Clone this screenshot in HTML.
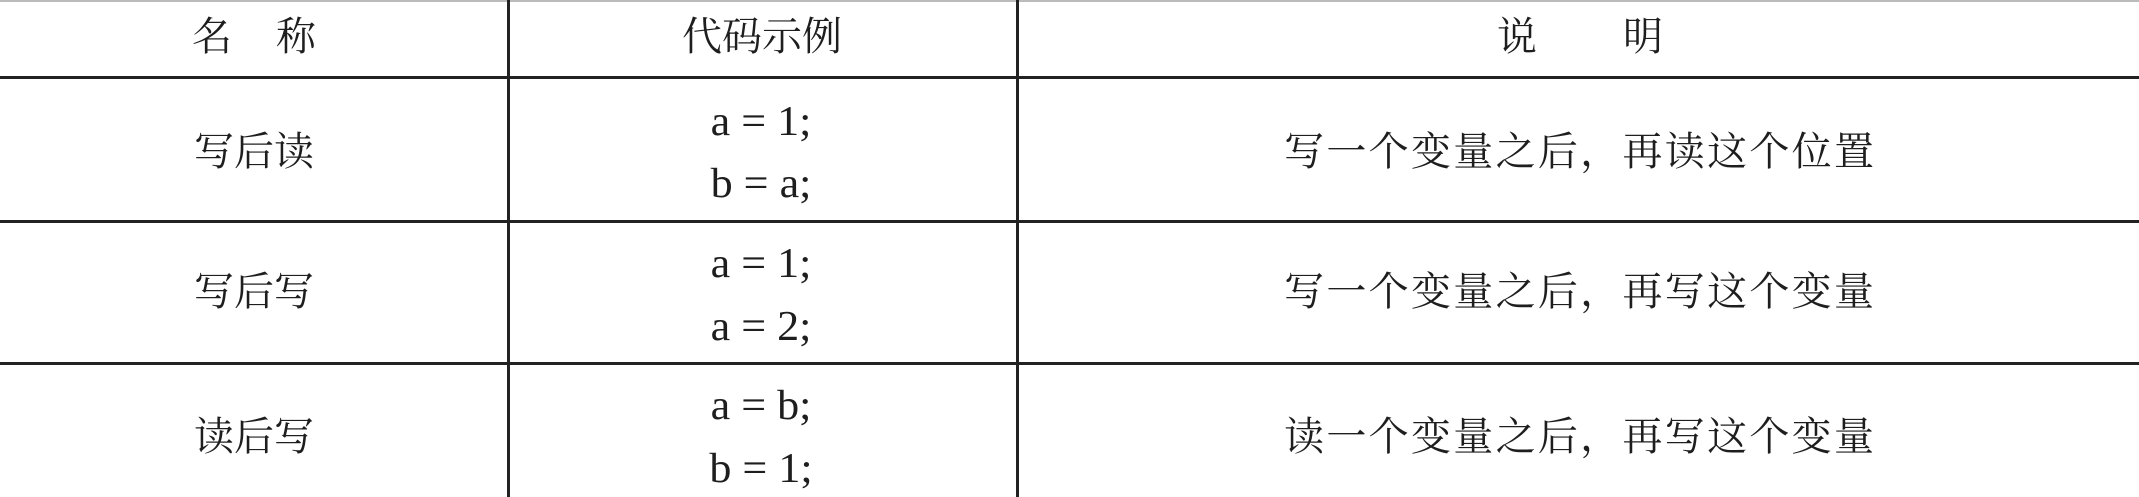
<!DOCTYPE html>
<html><head><meta charset="utf-8"><style>
html,body{margin:0;padding:0;width:2139px;height:497px;background:#fff;overflow:hidden;position:relative}
.t{position:absolute;transform:translate(-50%,-50%);white-space:nowrap;color:#1e1e1e;font-family:"Liberation Serif","Noto Serif CJK SC",serif;font-size:40px;line-height:1}
.c{font-family:"Liberation Serif",serif;font-size:42px;transform:translate(-50%,-50%) scaleX(1.05)}
.d{letter-spacing:2.3px;margin-left:1.2px}
.h{position:absolute;left:0;width:2139px;background:#222}
.v{position:absolute;top:0;height:497px;width:3px;background:#222}
</style></head><body>
<div class="h" style="top:0;height:2px;background:#bbb"></div>
<div class="h" style="top:76px;height:3px"></div>
<div class="h" style="top:220px;height:3px"></div>
<div class="h" style="top:362px;height:3px"></div>
<div class="v" style="left:507px"></div>
<div class="v" style="left:1016px"></div>

<div class="t" style="left:254px;top:37px;letter-spacing:44px;margin-left:22px">名称</div>
<div class="t" style="left:762px;top:37px">代码示例</div>
<div class="t" style="left:1580px;top:37px;letter-spacing:86px;margin-left:43px">说明</div>

<div class="t" style="left:254px;top:152px">写后读</div>
<div class="t c" style="left:761px;top:122px">a = 1;</div>
<div class="t c" style="left:761px;top:184px">b = a;</div>
<div class="t d" style="left:1579px;top:152px">写一个变量之后，再读这个位置</div>

<div class="t" style="left:254px;top:292px">写后写</div>
<div class="t c" style="left:761px;top:264px">a = 1;</div>
<div class="t c" style="left:761px;top:327px">a = 2;</div>
<div class="t d" style="left:1579px;top:292px">写一个变量之后，再写这个变量</div>

<div class="t" style="left:254px;top:437px">读后写</div>
<div class="t c" style="left:761px;top:406px">a = b;</div>
<div class="t c" style="left:761px;top:469px">b = 1;</div>
<div class="t d" style="left:1579px;top:437px">读一个变量之后，再写这个变量</div>
</body></html>
